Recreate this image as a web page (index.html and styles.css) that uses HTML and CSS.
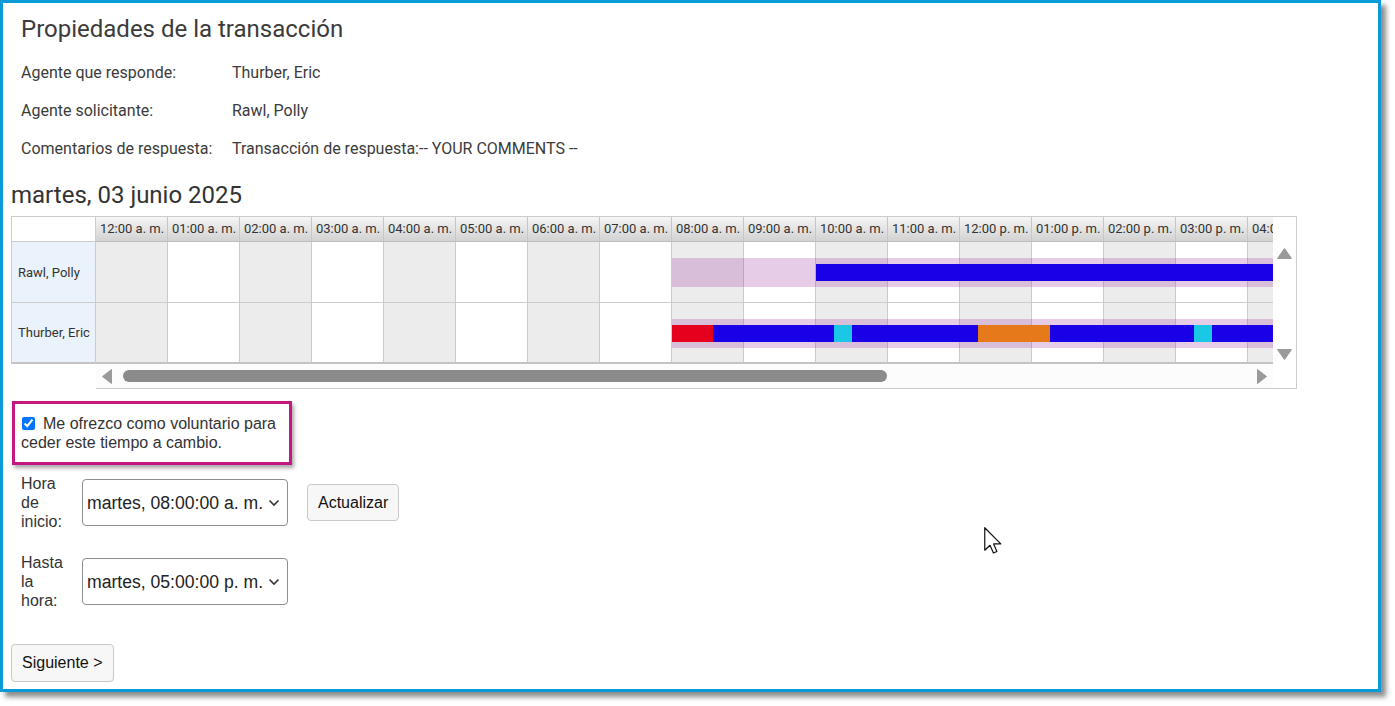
FILE: index.html
```html
<!DOCTYPE html>
<html lang="es">
<head>
<meta charset="utf-8">
<title>Propiedades de la transacción</title>
<link rel="stylesheet" href="styles.css">
</head>
<body>
<div class="frame">
  <section class="props">
    <h1 class="title">Propiedades de la transacción</h1>
    <div class="prop"><span class="plabel">Agente que responde:</span><span>Thurber, Eric</span></div>
    <div class="prop"><span class="plabel">Agente solicitante:</span><span>Rawl, Polly</span></div>
    <div class="prop"><span class="plabel">Comentarios de respuesta:</span><span>Transacción de respuesta:-- YOUR COMMENTS --</span></div>
  </section>

  <h2 class="date">martes, 03 junio 2025</h2>

  <div class="sched">
    <div class="names">
      <div class="corner"></div>
      <div class="name">Rawl, Polly</div>
      <div class="name last">Thurber, Eric</div>
    </div>
    <div class="scroller">
      <div class="scroll-main">
        <div class="viewport">
          <div class="track">
            <div class="hdr">
              <div class="hcell">12:00 a. m.</div><div class="hcell">01:00 a. m.</div><div class="hcell">02:00 a. m.</div><div class="hcell">03:00 a. m.</div><div class="hcell">04:00 a. m.</div><div class="hcell">05:00 a. m.</div><div class="hcell">06:00 a. m.</div><div class="hcell">07:00 a. m.</div><div class="hcell">08:00 a. m.</div><div class="hcell">09:00 a. m.</div><div class="hcell">10:00 a. m.</div><div class="hcell">11:00 a. m.</div><div class="hcell">12:00 p. m.</div><div class="hcell">01:00 p. m.</div><div class="hcell">02:00 p. m.</div><div class="hcell">03:00 p. m.</div><div class="hcell">04:00 p. m.</div>
            </div>
            <div class="row">
              <div class="cell"></div><div class="cell"></div><div class="cell"></div><div class="cell"></div><div class="cell"></div><div class="cell"></div><div class="cell"></div><div class="cell"></div><div class="cell"></div><div class="cell"></div><div class="cell"></div><div class="cell"></div><div class="cell"></div><div class="cell"></div><div class="cell"></div><div class="cell"></div><div class="cell"></div>
              <div class="band" style="left:576px;width:648px"></div>
              <div class="bar blue" style="left:720px;width:504px"></div>
            </div>
            <div class="row last">
              <div class="cell"></div><div class="cell"></div><div class="cell"></div><div class="cell"></div><div class="cell"></div><div class="cell"></div><div class="cell"></div><div class="cell"></div><div class="cell"></div><div class="cell"></div><div class="cell"></div><div class="cell"></div><div class="cell"></div><div class="cell"></div><div class="cell"></div><div class="cell"></div><div class="cell"></div>
              <div class="band" style="left:576px;width:648px"></div>
              <div class="bar red" style="left:576px;width:41px"></div>
              <div class="bar blue" style="left:617px;width:121px"></div>
              <div class="bar cyan" style="left:738px;width:18px"></div>
              <div class="bar blue" style="left:756px;width:126px"></div>
              <div class="bar orange" style="left:882px;width:72px"></div>
              <div class="bar blue" style="left:954px;width:144px"></div>
              <div class="bar cyan" style="left:1098px;width:18px"></div>
              <div class="bar blue" style="left:1116px;width:108px"></div>
            </div>
          </div>
        </div>
        <div class="vbar">
          <svg class="arrow" width="15" height="11" viewBox="0 0 15 11"><path d="M7.5 0.5 L14.5 10.5 H0.5 Z" fill="#9a9a9a" stroke="#9a9a9a" stroke-linejoin="round"/></svg>
          <svg class="arrow" width="15" height="11" viewBox="0 0 15 11"><path d="M0.5 0.5 H14.5 L7.5 10.5 Z" fill="#9a9a9a" stroke="#9a9a9a" stroke-linejoin="round"/></svg>
        </div>
      </div>
      <div class="hbar">
        <svg class="arrow" width="10" height="15" viewBox="0 0 10 15"><path d="M0.5 7.5 L9.5 0.5 V14.5 Z" fill="#9a9a9a" stroke="#9a9a9a" stroke-linejoin="round"/></svg>
        <div class="thumb"></div>
        <svg class="arrow right" width="10" height="15" viewBox="0 0 10 15"><path d="M0.5 0.5 L9.5 7.5 L0.5 14.5 Z" fill="#9a9a9a" stroke="#9a9a9a" stroke-linejoin="round"/></svg>
      </div>
    </div>
  </div>

  <div class="volunteer">
    <label class="vol-label"><input type="checkbox" class="chk" checked>Me ofrezco como voluntario para ceder este tiempo a cambio.</label>
  </div>

  <div class="timerow first">
    <div class="tlabel">Hora de inicio:</div>
    <div class="selwrap">
      <select class="sel"><option>martes, 08:00:00 a. m.</option></select>
      <svg class="chev" width="12" height="8" viewBox="0 0 12 8"><path d="M1.5 1.5 L6 6 L10.5 1.5" fill="none" stroke="#333" stroke-width="1.6"/></svg>
    </div>
    <button class="btn update">Actualizar</button>
  </div>

  <div class="timerow second">
    <div class="tlabel">Hasta la hora:</div>
    <div class="selwrap">
      <select class="sel"><option>martes, 05:00:00 p. m.</option></select>
      <svg class="chev" width="12" height="8" viewBox="0 0 12 8"><path d="M1.5 1.5 L6 6 L10.5 1.5" fill="none" stroke="#333" stroke-width="1.6"/></svg>
    </div>
  </div>

  <button class="btn next">Siguiente &gt;</button>
</div>

<svg class="cursor" width="18" height="27" viewBox="0 0 12 18"><path d="M0.5 0.5 V15.5 L4 12.2 L6.3 17.3 L8.6 16.3 L6.4 11.3 H11.2 Z" fill="#fff" stroke="#111" stroke-width="0.8" stroke-linejoin="round"/></svg>
</body>
</html>
```

FILE: styles.css
```css
html, body {
  margin: 0;
  padding: 0;
  background: #fff;
}

body {
  position: relative;
  width: 1395px;
  height: 706px;
  overflow: hidden;
}

.frame {
  box-sizing: border-box;
  width: 1381px;
  height: 692px;
  border: 3px solid #0a9ad8;
  box-shadow: 5px 5px 5px rgba(0, 0, 0, 0.45);
  padding: 12px 8px 0 8px;
  font-family: Roboto, "Liberation Sans", sans-serif;
  color: #333;
}

/* top properties */
.props {
  padding-left: 10px;
}

.title {
  margin: 0;
  font-size: 24px;
  font-weight: 400;
  line-height: 28px;
  color: #3b3b3b;
}

.prop {
  display: flex;
  font-size: 16px;
  line-height: 38px;
  color: #3b3b3b;
}

.prop:first-of-type {
  margin-top: 11px;
}

.plabel {
  width: 211px;
  flex: none;
}

.date {
  margin: 13px 0 0 0;
  font-size: 24px;
  font-weight: 400;
  line-height: 28px;
  color: #333;
}

/* schedule grid */
.sched {
  display: flex;
  width: 1286px;
  margin-top: 7px;
  font-size: 13px;
  color: #333;
}

.names {
  box-sizing: border-box;
  width: 85px;
  flex: none;
  border-top: 1px solid #ccc;
  border-left: 1px solid #ccc;
  border-right: 1px solid #ccc;
  align-self: flex-start;
}

.corner {
  height: 24px;
  border-bottom: 1px solid #ccc;
  background: #fff;
}

.name {
  height: 60px;
  border-bottom: 1px solid #ccc;
  background: #eaf3fb;
  display: flex;
  align-items: center;
  padding-left: 6px;
}

.name.last {
  height: 59px;
  border-bottom: 2px solid #c4c4c4;
}

.scroller {
  box-sizing: border-box;
  width: 1201px;
  flex: none;
  border-top: 1px solid #ccc;
  border-right: 1px solid #ccc;
  border-bottom: 1px solid #ccc;
}

.scroll-main {
  display: flex;
  height: 147px;
}

.viewport {
  width: 1177px;
  flex: none;
  overflow: hidden;
}

.track {
  width: 1224px;
}

.hdr {
  display: flex;
  height: 24px;
  border-bottom: 1px solid #bdbdbd;
}

.hcell {
  box-sizing: border-box;
  width: 72px;
  flex: none;
  border-right: 1px solid #c6c6c6;
  background: linear-gradient(#f6f6f6, #d2d2d2);
  padding-left: 4px;
  line-height: 24px;
  white-space: nowrap;
  overflow: hidden;
}

.row {
  position: relative;
  display: flex;
  height: 60px;
  border-bottom: 1px solid #ccc;
}

.row.last {
  height: 59px;
  border-bottom: 2px solid #c4c4c4;
}

.cell {
  box-sizing: border-box;
  width: 72px;
  flex: none;
  border-right: 1px solid #cbcbcb;
  background: #fff;
}

.cell:nth-child(odd) {
  background: #ececec;
}

.band {
  position: absolute;
  top: 16px;
  height: 29px;
  background: rgba(160, 61, 160, 0.263);
}

.bar {
  position: absolute;
  top: 22px;
  height: 17px;
}

.blue { background: #1a00e6; }
.red { background: #e5001e; }
.cyan { background: #1ac8e6; }
.orange { background: #e67a1a; }

.vbar {
  width: 23px;
  flex: none;
  box-sizing: border-box;
  padding: 31px 0 4px 4px;
  display: flex;
  flex-direction: column;
  justify-content: space-between;
  background: #fff;
}

.arrow {
  display: block;
}

.hbar {
  width: 1177px;
  height: 24px;
  display: flex;
  align-items: center;
  padding-left: 6px;
  box-sizing: border-box;
  background: #fcfcfc;
}

.thumb {
  margin-left: 11px;
  width: 764px;
  height: 12px;
  border-radius: 6px;
  background: #8b8b8b;
}

.arrow.right {
  margin-left: auto;
  margin-right: 6px;
}

/* volunteer box */
.volunteer {
  box-sizing: border-box;
  width: 280px;
  margin: 12px 0 0 1px;
  border: 3px solid #c2187f;
  box-shadow: 2px 3px 4px rgba(0, 0, 0, 0.35);
  padding: 10px 8px 10px 6px;
  font-family: "Liberation Sans", Arial, sans-serif;
  font-size: 16px;
  line-height: 19px;
  color: #333;
}

.chk {
  width: 13px;
  height: 13px;
  margin: 0 8px 0 1px;
  vertical-align: -1px;
  accent-color: #0075ff;
}

/* time rows */
.timerow {
  display: flex;
  align-items: center;
  padding-left: 10px;
  font-family: "Liberation Sans", Arial, sans-serif;
  font-size: 16px;
  color: #333;
}

.timerow.first {
  margin-top: 9px;
}

.timerow.second {
  margin-top: 22px;
}

.tlabel {
  width: 50px;
  margin-right: 11px;
  line-height: 19px;
}

.selwrap {
  position: relative;
  width: 206px;
  height: 47px;
}

.sel {
  box-sizing: border-box;
  width: 206px;
  height: 47px;
  appearance: none;
  -webkit-appearance: none;
  border: 1px solid #8f8f8f;
  border-radius: 4px;
  background: #fff;
  padding: 0 0 0 4px;
  font-family: "Liberation Sans", Arial, sans-serif;
  font-size: 17.6px;
  color: #222;
}

.chev {
  position: absolute;
  right: 8px;
  top: 20px;
  pointer-events: none;
}

.btn {
  box-sizing: border-box;
  font-family: "Liberation Sans", Arial, sans-serif;
  font-size: 16px;
  color: #111;
  background: #f7f7f7;
  border: 1px solid #c9c9c9;
  border-radius: 4px;
  padding: 0 10px;
}

.btn.update {
  margin-left: 19px;
  height: 37px;
}

.btn.next {
  display: block;
  margin-top: 34px;
  height: 38px;
}

.cursor {
  position: absolute;
  left: 984px;
  top: 527px;
}
```
